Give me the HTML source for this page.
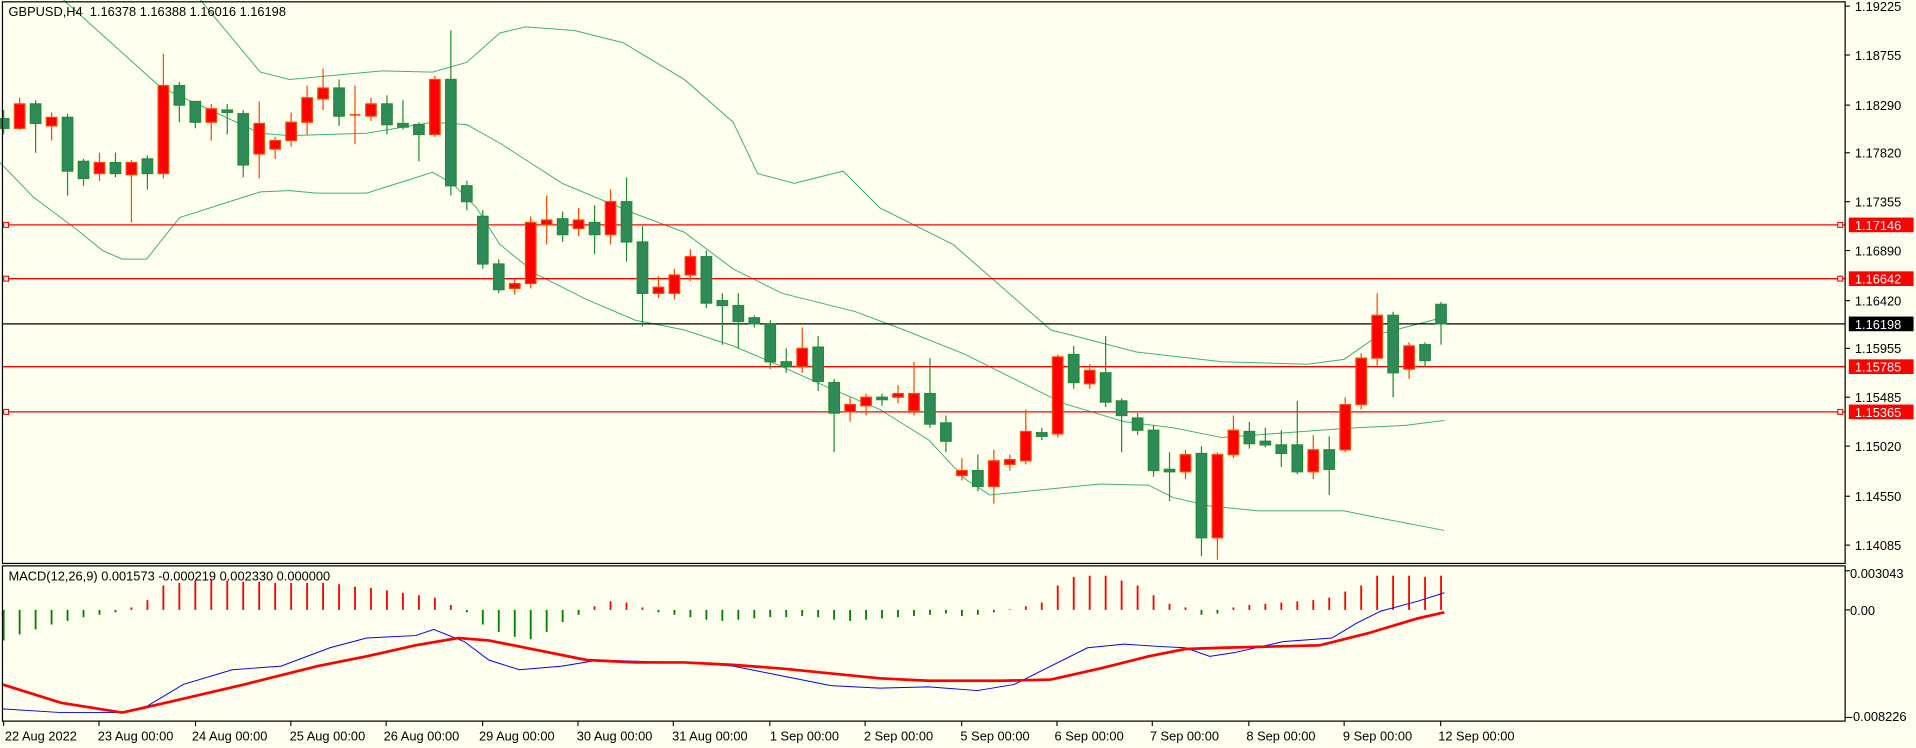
<!DOCTYPE html>
<html><head><meta charset="utf-8"><style>
html,body{margin:0;padding:0;background:#fffff0;}
svg{display:block;}
text{font-family:"Liberation Sans","DejaVu Sans",sans-serif;font-size:10.5px;fill:#000;}
</style></head><body>
<svg id="s" width="1916" height="748" viewBox="0 0 1568 612" preserveAspectRatio="none" xmlns="http://www.w3.org/2000/svg">
<rect x="0" y="0" width="1568" height="612" fill="#fffff0"/>
<g fill="none" stroke="#3cb371" stroke-width="1">
<polyline vector-effect="non-scaling-stroke" points="52,0 131,71 213,109 237,111 300,109 354,100 382,102 409,117 460,150 520,175 560,190 600,220 640,240 700,255 740,270 790,290 830,310 870,330 920,345 960,350 1000,358 1040,355 1080,352 1110,350 1150,348 1182,344"/>
<polyline vector-effect="non-scaling-stroke" points="164,0 213,59 237,65 313,58 354,59 382,51 409,27 430,22 470,25 510,35 560,65 600,100 620,142 650,150 690,140 720,170 780,200 820,235 860,270 880,275 930,288 1000,296 1070,298 1100,294 1130,273 1180,260"/>
<polyline vector-effect="non-scaling-stroke" points="0,133 27,161 63,188 84,205 100,212 120,212 147,178 213,157 237,156 259,158 300,158 354,141 370,150 390,170 409,200 440,225 480,245 520,262 560,270 600,283 640,300 680,318 720,335 760,360 790,392 810,405 860,400 900,396 940,397 960,407 990,414 1030,418 1070,418 1100,418 1130,424 1182,434"/>
</g>
<g stroke-width="1.1">
<line x1="2" y1="184" x2="1510" y2="184" stroke="#ff0000"/>
<line x1="2" y1="228" x2="1510" y2="228" stroke="#ff0000"/>
<line x1="2" y1="300" x2="1510" y2="300" stroke="#ff0000"/>
<line x1="2" y1="337" x2="1510" y2="337" stroke="#ff0000"/>
<line x1="2" y1="265" x2="1510" y2="265" stroke="#000"/>
</g>
<g fill="#fffff0" stroke="#ff0000" stroke-width="0.9">
<rect x="3" y="182" width="4" height="4"/><rect x="1504" y="182" width="4" height="4"/>
<rect x="3" y="226" width="4" height="4"/><rect x="1504" y="226" width="4" height="4"/>
<rect x="3" y="335" width="4" height="4"/><rect x="1504" y="335" width="4" height="4"/>
</g>
<g id="candles"></g>
<g id="hist"></g>
<polyline fill="none" stroke="#0000ff" stroke-width="0.8" points="2,580 50,583 80,583 100,583 120,578 150,560 190,548 230,545 270,530 300,522 340,520 355,515 380,525 400,540 425,548 460,545 490,540 520,541 560,542 600,545 640,553 680,561 720,563 760,562 800,565 830,560 860,545 890,530 920,527 950,529 970,530 990,537 1010,534 1050,525 1090,522 1110,510 1130,500 1160,492 1182,485"/>
<polyline fill="none" stroke="#ff0000" stroke-width="2.2" points="2,560 50,575 100,583 140,574 200,560 260,545 300,537 340,528 375,522 400,524 440,532 480,540 520,542 560,542 600,544 640,547 680,551 720,555 760,557 820,557 860,556 900,547 940,537 970,531 1000,530 1080,528 1120,518 1160,506 1182,501"/>
<g fill="none" stroke="#000" stroke-width="1">
<rect x="2" y="1.5" width="1508" height="459.5"/>
<rect x="2" y="463" width="1508" height="127"/>
</g>
<g id="ticks" stroke="#000" stroke-width="0.9"></g>
<g>
<text x="1518" y="9">1.19225</text>
<text x="1518" y="49">1.18755</text>
<text x="1518" y="90">1.18290</text>
<text x="1518" y="129">1.17820</text>
<text x="1518" y="169">1.17355</text>
<text x="1518" y="209">1.16890</text>
<text x="1518" y="250">1.16420</text>
<text x="1518" y="289">1.15955</text>
<text x="1518" y="329">1.15485</text>
<text x="1518" y="369">1.15020</text>
<text x="1518" y="410">1.14550</text>
<text x="1518" y="450">1.14085</text>
<rect x="1513" y="178" width="53" height="12" fill="#ff0000"/><text x="1518" y="188" style="fill:#fff">1.17146</text>
<rect x="1513" y="222" width="53" height="12" fill="#ff0000"/><text x="1518" y="232" style="fill:#fff">1.16642</text>
<rect x="1513" y="259" width="53" height="12" fill="#000"/><text x="1518" y="269" style="fill:#fff">1.16198</text>
<rect x="1513" y="294" width="53" height="12" fill="#ff0000"/><text x="1518" y="304" style="fill:#fff">1.15785</text>
<rect x="1513" y="331" width="53" height="12" fill="#ff0000"/><text x="1518" y="341" style="fill:#fff">1.15365</text>
<text x="1514" y="473">0.003043</text>
<text x="1514" y="503">0.00</text>
<text x="1513" y="590">-0.008226</text>
</g>
<text x="7" y="13" xml:space="preserve">GBPUSD,H4  1.16378 1.16388 1.16016 1.16198</text>
<text x="7" y="475">MACD(12,26,9) 0.001573 -0.000219 0.002330 0.000000</text>
<g>
<text x="4" y="606">22 Aug 2022</text>
<text x="80" y="606">23 Aug 00:00</text>
<text x="157" y="606">24 Aug 00:00</text>
<text x="237" y="606">25 Aug 00:00</text>
<text x="314" y="606">26 Aug 00:00</text>
<text x="392" y="606">29 Aug 00:00</text>
<text x="472" y="606">30 Aug 00:00</text>
<text x="550" y="606">31 Aug 00:00</text>
<text x="630" y="606">1 Sep 00:00</text>
<text x="707" y="606">2 Sep 00:00</text>
<text x="786" y="606">5 Sep 00:00</text>
<text x="863" y="606">6 Sep 00:00</text>
<text x="941" y="606">7 Sep 00:00</text>
<text x="1020" y="606">8 Sep 00:00</text>
<text x="1099" y="606">9 Sep 00:00</text>
<text x="1177" y="606">12 Sep 00:00</text>
</g>
</svg>
<script>
var NS="http://www.w3.org/2000/svg";
function el(p,t,a){var e=document.createElementNS(NS,t);for(var k in a)e.setAttribute(k,a[k]);p.appendChild(e);return e;}
var C=[['g',97,105,90,110],['r',85,105,80,106],['g',85,101,82,125],['r',96,103,92,115],['g',96,140,93,160],['g',132,146,130,152],['r',133,142,125,148],['g',133,142,125,145],['r',133,143,131,182],['g',130,142,127,155],
['r',70,142,44,146],['g',70,86,67,100],['g',83,100,83,105],['r',89,100,85,115],['g',90,92,85,110],['g',93,135,90,145],['r',101,126,83,146],['r',115,122,112,130],['r',100,115,92,120],['r',80,100,70,110],
['r',72,81,56,90],['g',72,95,65,103],['r',94,94,70,118],['r',85,95,80,99],['g',85,102,78,110],['g',101,104,82,106],['g',102,110,100,132],['r',65,110,62,112],['g',65,152,25,160],['g',152,165,148,172],
['g',177,216,172,220],['g',216,237,212,240],['r',232,236,228,241],['r',182,232,177,236],['r',180,184,160,200],['g',179,192,173,198],['r',180,187,170,193],['g',182,192,168,208],['r',165,192,155,200],['g',165,198,145,214],
['g',198,240,185,267],['r',235,240,226,244],['r',225,240,220,245],['r',210,225,204,230],['g',210,248,205,252],['g',246,250,240,282],['g',250,263,240,285],['g',260,265,258,268],['g',265,296,262,302],['g',296,300,285,305],
['r',285,300,268,305],['g',284,312,275,320],['g',313,338,310,370],['r',331,337,325,345],['r',325,332,322,340],['g',325,327,322,332],['r',322,325,315,330],['r',322,336,296,340],['g',322,347,293,350],['g',346,361,340,370],
['r',385,389,375,393],['g',385,398,372,402],['r',377,398,368,412],['r',376,380,372,385],['r',353,377,335,380],['g',354,357,350,360],['r',292,355,290,358],['g',290,313,283,318],['r',303,314,298,318],['g',305,329,275,333],
['g',328,340,326,370],['g',342,352,338,356],['g',352,385,348,390],['g',384,386,370,410],['r',372,386,368,392],['g',371,440,365,455],['r',372,440,370,458],['r',352,372,340,375],['g',353,363,345,367],['g',361,364,350,366],
['g',364,371,352,382],['g',364,386,328,388],['r',368,386,356,392],['g',368,384,357,405],['r',331,368,325,370],['r',293,331,289,335],['r',258,293,240,300],['g',258,305,255,325],['r',283,302,280,310],['g',282,295,280,300],['g',249,265,247,282]];
var cg=document.getElementById('candles');
C.forEach(function(c,i){var x=3+i*13.07;var red=c[0]=='r';var st=red?'#ff4500':'#238a3c';var fl=red?'#ff0000':'#2e8b57';
el(cg,'line',{x1:x,x2:x,y1:c[3],y2:c[4],stroke:st,'stroke-width':1});
var h=c[2]-c[1];if(h<1.5){el(cg,'line',{x1:x-4.3,x2:x+4.3,y1:c[1],y2:c[1],stroke:st,'stroke-width':1.3});}
else el(cg,'rect',{x:x-4.3,y:c[1],width:8.6,height:h,fill:fl,stroke:st,'stroke-width':1});});
var H=[-25,-20,-16,-12,-9,-6,-4,-2,2,8,20,22,24,24,24,23,23,22,22,22,22,21,19,18,16,14,12,10,4,-2,-12,-18,-22,-24,-18,-10,-4,3,7,6,2,-2,-4,-6,-8,-9,-8,-7,-6,-6,-5,-6,-8,-9,-8,-7,-6,-5,-4,-3,-5,-4,-2,0,3,6,20,27,28,28,24,20,12,5,2,-4,-3,2,4,5,6,7,8,10,15,20,28,28,28,27,28];
var hg=document.getElementById('hist');
H.forEach(function(v,i){var x=3+i*13.07;if(v==0)v=0.5;var col=v>0?'#ff0000':'#008000';
el(hg,'line',{x1:x,x2:x,y1:499,y2:499-v,stroke:col,'stroke-width':1.5});});
var tg=document.getElementById('ticks');
[5,45,86,125,165,205,246,285,325,365,406,446,467,499,587].forEach(function(y){el(tg,'line',{x1:1510,x2:1514,y1:y,y2:y});});
[3,81,160,238,316,395,473,551,630,708,787,865,943,1022,1100,1179].forEach(function(x){el(tg,'line',{x1:x,x2:x,y1:590,y2:594});});
</script>
</body></html>
